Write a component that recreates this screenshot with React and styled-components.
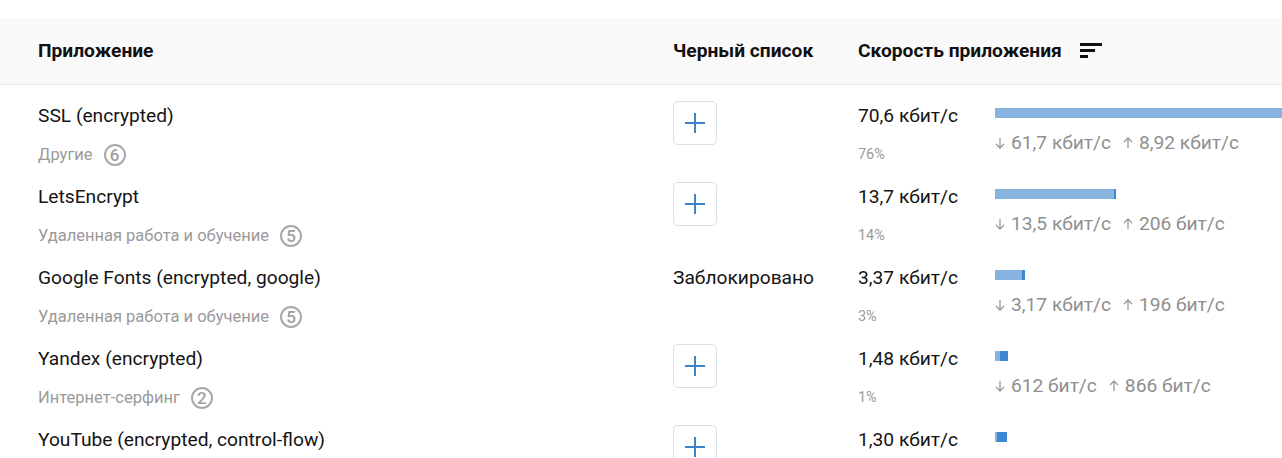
import React from 'react'
import styled, { createGlobalStyle } from 'styled-components'

const GlobalStyle = createGlobalStyle`
  body {
    margin: 0;
    background: #fff;
    font-family: Roboto, "Noto Sans", sans-serif;
    overflow: hidden;
  }
`

const Page = styled.div`
  padding-top: 18px;
  width: 1282px;
  overflow: hidden;
`

const Grid = styled.div`
  display: grid;
  grid-template-columns: 635px 185px 137px 1fr;
`

const Header = styled(Grid)`
  height: 66px;
  background: #f9f9f9;
  border-bottom: 1px solid #ececec;
  align-items: center;
  padding-left: 38px;
`

const HeadCell = styled.div`
  display: flex;
  align-items: center;
  gap: 18px;
  font-size: 19.2px;
  font-weight: 700;
  color: #111;
  white-space: nowrap;
  padding-bottom: 2px;

  svg {
    flex-shrink: 0;
  }
`

const Row = styled(Grid)`
  height: 81px;
  padding-left: 38px;
`

const Cell = styled.div`
  display: flex;
  flex-direction: column;
  align-items: flex-start;
  padding-top: ${p => p.$top || 20}px;
  min-width: 0;
`

const Title = styled.div`
  font-size: 19.2px;
  line-height: 22px;
  color: #141414;
  white-space: nowrap;
`

const Sub = styled.div`
  display: flex;
  align-items: center;
  gap: 11px;
  margin-top: 16px;
  font-size: 16.5px;
  line-height: 24px;
  color: #9a9a9a;
  white-space: nowrap;
`

const Badge = styled.span`
  display: inline-flex;
  align-items: center;
  justify-content: center;
  width: 18px;
  height: 18px;
  border: 2px solid #a8a8a8;
  border-radius: 50%;
  font-size: 17px;
  font-weight: 500;
  color: #a0a0a0;
  line-height: 1;
`

const AddButton = styled.button`
  width: 44px;
  height: 44px;
  padding: 0;
  display: flex;
  align-items: center;
  justify-content: center;
  background: #fff;
  border: 1px solid #d6e0ea;
  border-radius: 5px;
  cursor: pointer;
`

const Percent = styled.div`
  margin-top: 18px;
  font-size: 14.4px;
  line-height: 20px;
  color: #9a9a9a;
`

const Bar = styled.div`
  display: flex;
  height: 10px;
  flex-shrink: 0;
`

const Down = styled.div`
  background: #86b4de;
  height: 100%;
`

const Up = styled.div`
  background: #3e88d2;
  height: 100%;
`

const Traffic = styled.div`
  display: flex;
  align-items: center;
  gap: 12px;
  margin-top: 14px;
  font-size: 19.2px;
  line-height: 22px;
  color: #8f8f8f;
  white-space: nowrap;
`

const Rate = styled.span`
  display: inline-flex;
  align-items: center;
  gap: 6px;
`

const SortIcon = () => (
  <svg width='22' height='16' viewBox='0 0 22 16'>
    <rect x='0' y='1' width='22' height='3' fill='#111' />
    <rect x='0' y='7' width='15' height='3' fill='#111' />
    <rect x='0' y='13' width='8' height='3' fill='#111' />
  </svg>
)

const PlusIcon = () => (
  <svg width='22' height='22' viewBox='0 0 22 22'>
    <path d='M11 1v20M1 11h20' stroke='#3d85c6' strokeWidth='2' fill='none' />
  </svg>
)

const ArrowIcon = ({ up }) => (
  <svg width='10' height='12' viewBox='0 0 10 12' style={{ transform: up ? 'rotate(180deg)' : 'none' }}>
    <path d='M5 1v10M1 7l4 4 4-4' stroke='#9a9a9a' strokeWidth='1.3' fill='none' />
  </svg>
)

const PX_PER_PCT = 8.63

const apps = [
  { name: 'SSL (encrypted)', group: 'Другие', count: 6, speed: '70,6 кбит/с', pct: 76, down: '61,7 кбит/с', up: '8,92 кбит/с', downShare: 0.874 },
  { name: 'LetsEncrypt', group: 'Удаленная работа и обучение', count: 5, speed: '13,7 кбит/с', pct: 14, down: '13,5 кбит/с', up: '206 бит/с', downShare: 0.985 },
  { name: 'Google Fonts (encrypted, google)', group: 'Удаленная работа и обучение', count: 5, speed: '3,37 кбит/с', pct: 3, down: '3,17 кбит/с', up: '196 бит/с', downShare: 0.9, blocked: true, width: 30 },
  { name: 'Yandex (encrypted)', group: 'Интернет-серфинг', count: 2, speed: '1,48 кбит/с', pct: 1, down: '612 бит/с', up: '866 бит/с', downShare: 0.41, width: 13 },
  { name: 'YouTube (encrypted, control-flow)', group: 'Интернет-серфинг', count: 2, speed: '1,30 кбит/с', pct: 1, down: '120 бит/с', up: '1,18 кбит/с', downShare: 0.15, width: 12 }
]

const AppRow = ({ app }) => {
  const total = app.width || Math.round(app.pct * PX_PER_PCT)
  const down = Math.round(total * app.downShare)
  return (
    <Row>
      <Cell>
        <Title>{app.name}</Title>
        <Sub>{app.group}<Badge>{app.count}</Badge></Sub>
      </Cell>
      <Cell $top={app.blocked ? 20 : 16}>
        {app.blocked
          ? <Title>Заблокировано</Title>
          : <AddButton aria-label='Добавить в черный список'><PlusIcon /></AddButton>}
      </Cell>
      <Cell>
        <Title>{app.speed}</Title>
        <Percent>{app.pct}%</Percent>
      </Cell>
      <Cell $top={23}>
        <Bar>
          <Down style={{ width: down }} />
          <Up style={{ width: total - down }} />
        </Bar>
        <Traffic>
          <Rate><ArrowIcon />{app.down}</Rate>
          <Rate><ArrowIcon up />{app.up}</Rate>
        </Traffic>
      </Cell>
    </Row>
  )
}

export default function App () {
  return (
    <>
      <GlobalStyle />
      <Page>
        <Header>
          <HeadCell>Приложение</HeadCell>
          <HeadCell>Черный список</HeadCell>
          <HeadCell>Скорость приложения <SortIcon /></HeadCell>
          <div />
        </Header>
        {apps.map(app => <AppRow key={app.name} app={app} />)}
      </Page>
    </>
  )
}
